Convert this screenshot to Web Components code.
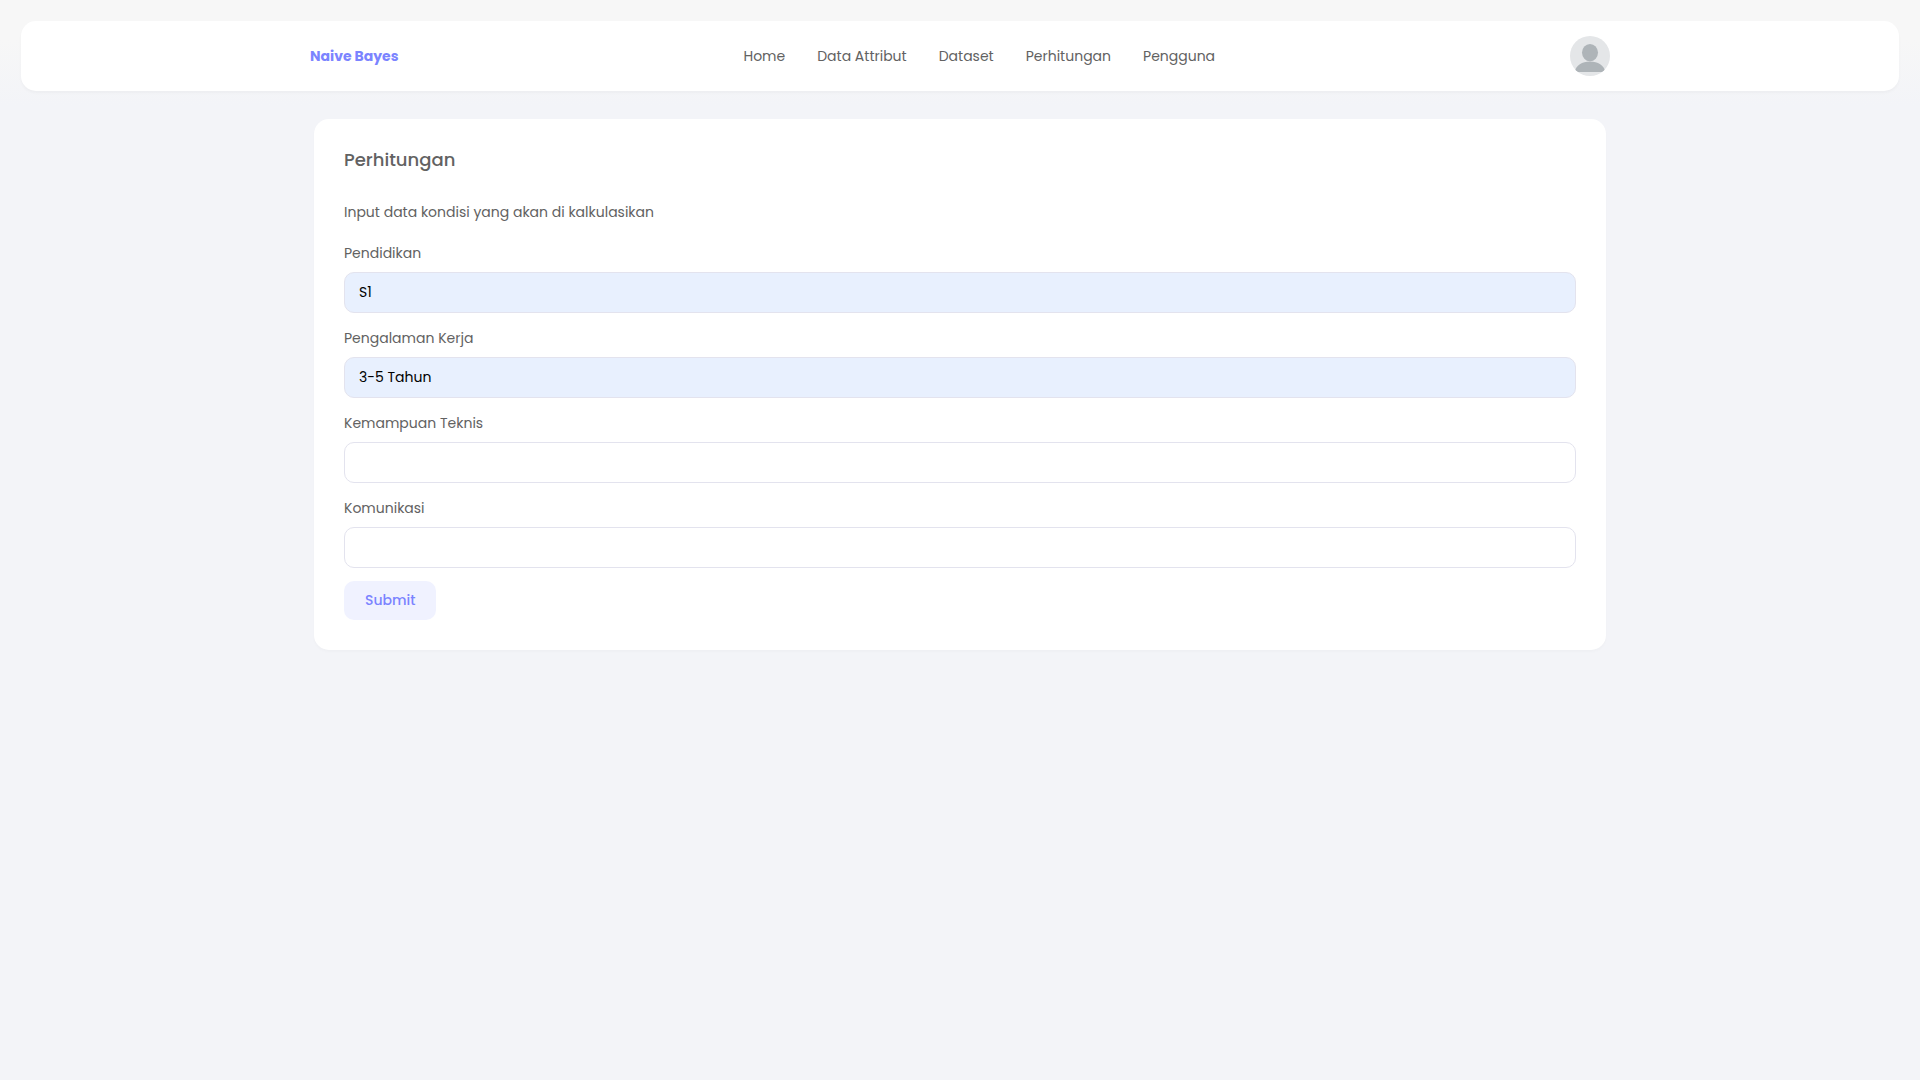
<!DOCTYPE html>
<html lang="id">
<head>
<meta charset="utf-8">
<meta name="viewport" content="width=device-width, initial-scale=1">
<title>Naive Bayes - Perhitungan</title>
<style>
  html { --brand: #7b84ff; --brand-soft: #f0f2ff; --line: #e3e3ee; --surface: #fff; }
  body {
    margin: 0;
    min-height: 100vh;
    background: linear-gradient(#f7f7f7 40px, #f3f4f8 105px);
    color: #626262;
    font: 400 14px/21px Poppins, Inter, "Liberation Sans", sans-serif;
  }
</style>
</head>
<body>
<app-page></app-page>
<script>
class BaseElement extends HTMLElement {
  connectedCallback() {
    if (this.shadowRoot) return;
    const template = document.createElement('template');
    template.innerHTML = this.render();
    this.attachShadow({ mode: 'open' }).append(template.content.cloneNode(true));
  }
}

class UserAvatar extends BaseElement {
  render() {
    return `
      <style>
        :host { display: block; padding-left: 10px; }
        a { display: block; width: 40px; height: 40px; }
        svg { display: block; width: 100%; height: 100%; border-radius: 50%; }
      </style>
      <a href="#profil" aria-label="Profil">
        <svg viewBox="0 0 40 40" aria-hidden="true">
          <rect width="40" height="40" fill="#e4e6e8"/>
          <ellipse cx="20" cy="16.6" rx="8" ry="8.7" fill="#aeb4b8"/>
          <path d="M4.5 36C6 29.5 12 25.5 20 25.5S34 29.5 35.5 36Z" fill="#aeb4b8"/>
        </svg>
      </a>`;
  }
}

class NavLink extends BaseElement {
  render() {
    return `
      <style>
        :host { display: block; }
        a { color: inherit; text-decoration: none; }
        a:hover { color: var(--brand); }
      </style>
      <a href="${this.getAttribute('href')}"><slot></slot></a>`;
  }
}

class AppHeader extends BaseElement {
  render() {
    return `
      <style>
        :host { display: block; padding: 21px 21px 0; }
        header {
          background: var(--surface);
          border-radius: 15px;
          box-shadow: 0 2px 3px rgba(4, 9, 20, .03);
          padding: 15px;
        }
        .bar {
          display: flex; align-items: center; justify-content: space-between;
          max-width: 1300px; margin: 0 auto;
        }
        .brand { color: var(--brand); font-weight: 700; text-decoration: none; }
        nav { display: flex; gap: 32px; }
      </style>
      <header>
        <div class="bar">
          <a class="brand" href="#home">Naive Bayes</a>
          <nav><slot></slot></nav>
          <user-avatar></user-avatar>
        </div>
      </header>`;
  }
}

class ContentCard extends BaseElement {
  render() {
    return `
      <style>
        :host {
          display: block; padding: 30px;
          background: var(--surface);
          border-radius: 15px;
          box-shadow: 0 2px 3px rgba(4, 9, 20, .02);
        }
        h1 { margin: 0 0 32px; font-size: 18px; line-height: 21px; font-weight: 500; }
      </style>
      <h1>${this.getAttribute('heading')}</h1>
      <slot></slot>`;
  }
}

class TextField extends BaseElement {
  render() {
    const name = this.getAttribute('name');
    const value = this.getAttribute('value') || '';
    return `
      <style>
        :host { display: flex; flex-direction: column; gap: 8px; }
        input {
          box-sizing: border-box; width: 100%; height: 41px;
          padding: 0 14px;
          border: 1px solid var(--line); border-radius: 10px;
          background: var(--surface);
          color: #000; font: inherit; outline: none;
        }
        input.filled { background: #e8f0fe; }
        input:focus { border-color: var(--brand); }
      </style>
      <label for="${name}">${this.getAttribute('label')}</label>
      <input id="${name}" name="${name}" type="text" value="${value}" class="${value ? 'filled' : ''}">`;
  }
}

class CalculationForm extends BaseElement {
  render() {
    return `
      <style>
        :host { display: block; }
        p { margin: 0 0 20px; }
        form { display: flex; flex-direction: column; align-items: flex-start; gap: 13px; }
        .fields { display: flex; flex-direction: column; gap: 15px; width: 100%; }
        button {
          height: 39px; padding: 0 21px;
          border: 0; border-radius: 10px;
          background: var(--brand-soft); color: var(--brand);
          font: inherit; font-weight: 500; cursor: pointer;
        }
      </style>
      <p>Input data kondisi yang akan di kalkulasikan</p>
      <form>
        <div class="fields">
          <text-field name="pendidikan" label="Pendidikan" value="S1"></text-field>
          <text-field name="pengalaman" label="Pengalaman Kerja" value="3-5 Tahun"></text-field>
          <text-field name="teknis" label="Kemampuan Teknis"></text-field>
          <text-field name="komunikasi" label="Komunikasi"></text-field>
        </div>
        <button type="submit">Submit</button>
      </form>`;
  }
}

class AppPage extends BaseElement {
  render() {
    return `
      <style>
        :host { display: block; }
        main { max-width: 1292px; margin: 28px auto 0; }
      </style>
      <app-header>
        <nav-link href="#home">Home</nav-link>
        <nav-link href="#attribut">Data Attribut</nav-link>
        <nav-link href="#dataset">Dataset</nav-link>
        <nav-link href="#perhitungan">Perhitungan</nav-link>
        <nav-link href="#pengguna">Pengguna</nav-link>
      </app-header>
      <main>
        <content-card heading="Perhitungan">
          <calculation-form></calculation-form>
        </content-card>
      </main>`;
  }
}

customElements.define('user-avatar', UserAvatar);
customElements.define('nav-link', NavLink);
customElements.define('app-header', AppHeader);
customElements.define('content-card', ContentCard);
customElements.define('text-field', TextField);
customElements.define('calculation-form', CalculationForm);
customElements.define('app-page', AppPage);
</script>
</body>
</html>
